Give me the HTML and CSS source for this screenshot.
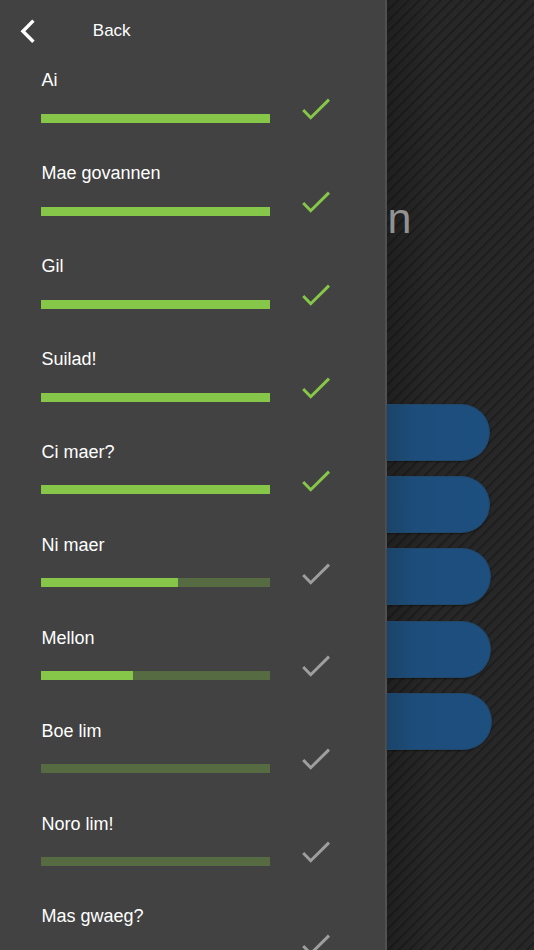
FILE: index.html
```html
<!DOCTYPE html>
<html lang="en">
<head>
<meta charset="utf-8">
<title>Phrases</title>
<link rel="stylesheet" href="styles.css">
</head>
<body>
<svg class="defs" aria-hidden="true"><symbol id="check" viewBox="0 0 30 24"><path d="M2.2 12 9.7 19.7 28 1.6" fill="none" stroke="currentColor" stroke-width="3"/></symbol></svg>
<div class="screen">
  <aside class="drawer">
    <header class="top">
      <svg class="chevron" viewBox="0 0 16 24"><path d="M13.4 1.6 2.9 12.2 13.4 22.8" fill="none" stroke="currentColor" stroke-width="3.4"/></svg>
      <span class="back">Back</span>
    </header>
    <ul class="list">
      <li class="row done"><div class="info"><span class="name">Ai</span><div class="bar"><div class="fill" style="width:100%"></div></div></div><svg class="check"><use href="#check"/></svg></li>
      <li class="row done"><div class="info"><span class="name">Mae govannen</span><div class="bar"><div class="fill" style="width:100%"></div></div></div><svg class="check"><use href="#check"/></svg></li>
      <li class="row done"><div class="info"><span class="name">Gil</span><div class="bar"><div class="fill" style="width:100%"></div></div></div><svg class="check"><use href="#check"/></svg></li>
      <li class="row done"><div class="info"><span class="name">Suilad!</span><div class="bar"><div class="fill" style="width:100%"></div></div></div><svg class="check"><use href="#check"/></svg></li>
      <li class="row done"><div class="info"><span class="name">Ci maer?</span><div class="bar"><div class="fill" style="width:100%"></div></div></div><svg class="check"><use href="#check"/></svg></li>
      <li class="row"><div class="info"><span class="name">Ni maer</span><div class="bar"><div class="fill" style="width:60%"></div></div></div><svg class="check"><use href="#check"/></svg></li>
      <li class="row"><div class="info"><span class="name">Mellon</span><div class="bar"><div class="fill" style="width:40%"></div></div></div><svg class="check"><use href="#check"/></svg></li>
      <li class="row"><div class="info"><span class="name">Boe lim</span><div class="bar"><div class="fill" style="width:0%"></div></div></div><svg class="check"><use href="#check"/></svg></li>
      <li class="row"><div class="info"><span class="name">Noro lim!</span><div class="bar"><div class="fill" style="width:0%"></div></div></div><svg class="check"><use href="#check"/></svg></li>
      <li class="row"><div class="info"><span class="name">Mas gwaeg?</span><div class="bar"><div class="fill" style="width:0%"></div></div></div><svg class="check"><use href="#check"/></svg></li>
    </ul>
  </aside>
  <main class="menu">
    <h1 class="title">n</h1>
    <div class="buttons">
      <div class="button"></div>
      <div class="button"></div>
      <div class="button mid"></div>
      <div class="button mid"></div>
      <div class="button wide"></div>
    </div>
  </main>
</div>
</body>
</html>
```

FILE: styles.css
```css
* { box-sizing: border-box; }
body { margin: 0; background: #262626; font-family: "Liberation Sans", Arial, sans-serif; color: #fff; }
.defs { position: absolute; width: 0; height: 0; }
.screen { display: flex; height: 950px; overflow: hidden; }
.drawer { flex: none; width: 387px; height: 950px; overflow: hidden; background: #424242; border-right: 2px solid #505050; }
.top { display: flex; align-items: center; height: 61px; padding-left: 20px; }
.chevron { width: 16px; height: 24px; margin-top: 1px; }
.back { margin-left: 56.8px; font-size: 17px; line-height: 20px; }
.list { list-style: none; margin: 0; padding: 0; }
.row { display: flex; height: 92.9px; padding: 9.45px 0 0 41.4px; color: #9e9e9e; }
.row.done { color: #86c649; }
.info { width: 228.3px; }
.name { display: block; color: #fff; font-size: 18px; line-height: 21px; }
.bar { margin-top: 22.4px; height: 9px; background: #566b41; }
.fill { height: 100%; background: #86c649; }
.check { width: 30px; height: 24px; margin: 27.7px 0 0 31.8px; }
.menu {
  flex: 1;
  padding-top: 193px;
  background:
    linear-gradient(90deg, rgba(0,0,0,.2), rgba(0,0,0,0) 45px),
    repeating-linear-gradient(135deg, #1d1d1d 0, #1d1d1d .6px, #262626 2px, #282828 6.4px, #1d1d1d 7.55px);
}
.title { margin: 0; padding-left: .5px; font-size: 43px; font-weight: 400; line-height: 50px; color: #929292; }
.buttons { display: flex; flex-direction: column; gap: 15.2px; margin-top: 161px; }
.button {
  width: 103px;
  height: 57px;
  border: 1px solid #214668;
  border-left: 0;
  border-radius: 0 28.5px 28.5px 0;
  background: linear-gradient(90deg, #1a4469, #1d4d7b 28px, #1d4f7f);
  box-shadow: 0 1px 2px rgba(0,0,0,.4);
}
.button.mid { width: 104px; }
.button.wide { width: 105px; }
```
